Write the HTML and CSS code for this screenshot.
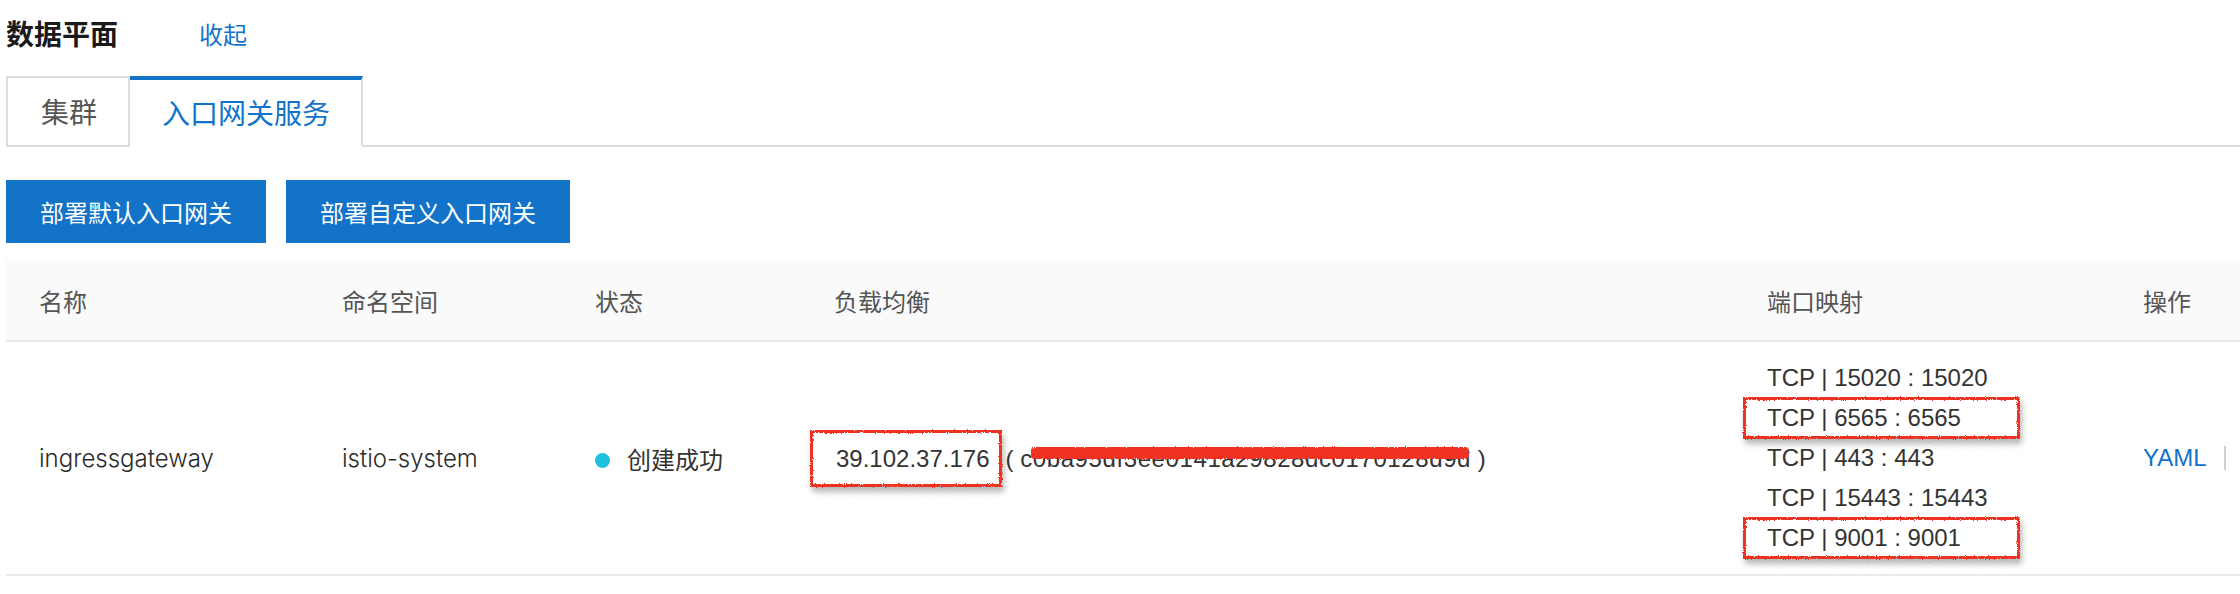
FILE: index.html
```html
<!DOCTYPE html>
<html lang="zh-CN">
<head>
    <meta charset="UTF-8">
    <meta name="viewport" content="width=device-width, initial-scale=1.0">
    <title>数据平面</title>
    <link rel="stylesheet" href="styles.css">
</head>
<body>
    <svg class="svg-defs" aria-hidden="true">
        <filter id="rough">
            <feTurbulence type="fractalNoise" baseFrequency="0.9" numOctaves="2" result="noise"/>
            <feDisplacementMap in="SourceGraphic" in2="noise" scale="3"/>
        </filter>
    </svg>

    <div class="page">
        <div class="title-bar">
            <h2 class="title">数据平面</h2>
            <a class="collapse" href="#">收起</a>
        </div>

        <div class="tabs">
            <div class="tab">集群</div>
            <div class="tab active">入口网关服务</div>
        </div>

        <div class="toolbar">
            <button class="btn" type="button">部署默认入口网关</button>
            <button class="btn" type="button">部署自定义入口网关</button>
        </div>

        <table class="gateway-table">
            <colgroup>
                <col class="col-name">
                <col class="col-ns">
                <col class="col-status">
                <col class="col-lb">
                <col class="col-ports">
                <col class="col-ops">
            </colgroup>
            <thead>
                <tr>
                    <th>名称</th>
                    <th>命名空间</th>
                    <th>状态</th>
                    <th>负载均衡</th>
                    <th>端口映射</th>
                    <th>操作</th>
                </tr>
            </thead>
            <tbody>
                <tr>
                    <td class="latin">ingressgateway</td>
                    <td class="latin">istio-system</td>
                    <td><span class="dot"></span>创建成功</td>
                    <td class="lb">
                        <span class="ip">39.102.37.176</span>(&nbsp;<span class="hash">c0ba95df3ee0141a29828dc0170128d9d</span>&nbsp;)
                    </td>
                    <td>
                        <div class="port">TCP | 15020 : 15020</div>
                        <div class="port marked">TCP | 6565 : 6565</div>
                        <div class="port">TCP | 443 : 443</div>
                        <div class="port">TCP | 15443 : 15443</div>
                        <div class="port marked">TCP | 9001 : 9001</div>
                    </td>
                    <td class="ops-cell">
                        <div class="ops">
                            <a class="link" href="#">YAML</a>
                            <span class="divider"></span>
                        </div>
                    </td>
                </tr>
            </tbody>
        </table>
    </div>
</body>
</html>
```

FILE: styles.css
```css
body {
    margin: 0;
    padding: 0;
    background: #fff;
    font-family: "Liberation Sans", "Noto Sans CJK SC", sans-serif;
    color: #333;
    overflow: hidden;
}

.svg-defs {
    position: absolute;
    width: 0;
    height: 0;
}

.page {
    padding-left: 6px;
    width: 2234px;
}

.title-bar {
    display: flex;
    align-items: center;
    height: 66px;
}

.title {
    margin: 0;
    font-family: "Noto Sans CJK SC", sans-serif;
    font-size: 28px;
    font-weight: bold;
    color: #1a1a1a;
}

.collapse {
    margin-left: 81px;
    font-family: "Noto Sans CJK SC", sans-serif;
    font-size: 24px;
    color: #1273c9;
    text-decoration: none;
}

/* tabs */
.tabs {
    display: flex;
    margin-top: 10px;
    border-bottom: 2px solid #dcdcdc;
}

.tab {
    box-sizing: border-box;
    height: 71px;
    margin-bottom: -2px;
    padding: 0 31px 0 33px;
    border: 2px solid #dcdcdc;
    font-family: "Noto Sans CJK SC", sans-serif;
    font-size: 28px;
    line-height: 67px;
    color: #555;
}

.tab.active {
    border-left: 0;
    border-top: 4px solid #1273c9;
    border-bottom: 2px solid #fff;
    padding: 0 31px 0 32px;
    line-height: 65px;
    color: #1273c9;
}

/* buttons */
.toolbar {
    display: flex;
    gap: 20px;
    margin-top: 33px;
}

.btn {
    height: 63px;
    padding: 0 34px;
    border: none;
    background-color: #1273c9;
    color: #fff;
    font-family: "Noto Sans CJK SC", sans-serif;
    font-size: 24px;
    cursor: pointer;
}

/* table */
.gateway-table {
    width: 2234px;
    margin-top: 17px;
    border-collapse: collapse;
    table-layout: fixed;
}

.col-name { width: 303px; }
.col-ns { width: 253px; }
.col-status { width: 239px; }
.col-lb { width: 933px; }
.col-ports { width: 376px; }
.col-ops { width: 130px; }

th {
    height: 80px;
    padding: 0 33px;
    background-color: #fafafa;
    border-bottom: 2px solid #e9e9e9;
    text-align: left;
    font-family: "Noto Sans CJK SC", sans-serif;
    font-size: 24px;
    font-weight: normal;
    color: #555;
}

td {
    height: 232px;
    padding: 0 33px;
    border-bottom: 2px solid #e9e9e9;
    font-size: 24px;
    color: #333;
    vertical-align: middle;
    white-space: nowrap;
}

td.latin {
    font-family: Inter, "Noto Sans CJK SC", sans-serif;
    font-weight: 300;
    color: #2b2b2b;
}

td.ops-cell {
    padding-right: 0;
}

.dot {
    display: inline-block;
    width: 15px;
    height: 15px;
    margin-right: 17px;
    border-radius: 50%;
    background-color: #20c1df;
    vertical-align: 1px;
}

/* load balancer */
.ip {
    position: relative;
    display: inline-block;
    margin-left: -24px;
    margin-right: 3px;
    padding: 0 13px 0 26px;
    line-height: 57px;
}

.ip::after,
.port.marked::after {
    content: '';
    position: absolute;
    border: 3px solid #ee3320;
    box-shadow: 2px 5px 6px rgba(0, 0, 0, 0.28);
    filter: url(#rough);
}

.ip::after {
    left: 0;
    top: 0;
    right: 0;
    bottom: 0;
}

.hash {
    position: relative;
    letter-spacing: 0.6px;
}

.hash::after {
    content: '';
    position: absolute;
    left: 11px;
    right: 2px;
    top: 2px;
    height: 12px;
    border-radius: 4px;
    background-color: #ef3322;
    filter: url(#rough);
}

/* ports */
.port {
    position: relative;
    line-height: 40px;
}

.port.marked::after {
    left: -24px;
    top: -1px;
    width: 271px;
    height: 36px;
}

/* actions */
.ops {
    display: flex;
    align-items: center;
}

.link {
    color: #1273c9;
    text-decoration: none;
}

.divider {
    width: 2px;
    height: 24px;
    margin-left: 17px;
    background-color: #d0d0d0;
}
```
